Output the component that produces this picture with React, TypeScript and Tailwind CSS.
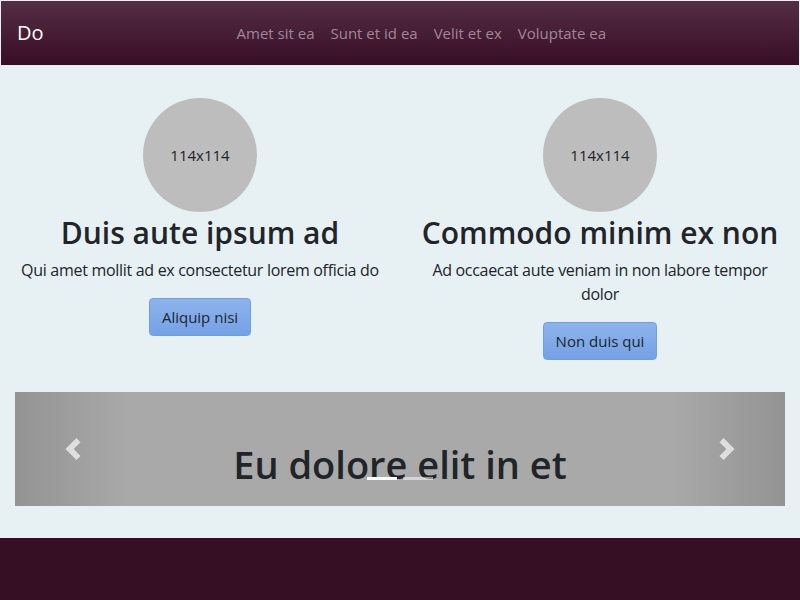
import React from "react";

function Chevron({ dir }: { dir: "left" | "right" }) {
  return (
    <svg width="22" height="22" viewBox="0 0 8 8" aria-hidden="true">
      {dir === "left" ? (
        <path d="M5.25 0l-4 4 4 4 1.5-1.5L4.25 4l2.5-2.5L5.25 0z" fill="#dedede" />
      ) : (
        <path d="M2.75 0l-1.5 1.5L3.75 4l-2.5 2.5L2.75 8l4-4-4-4z" fill="#dedede" />
      )}
    </svg>
  );
}

function Feature({
  title,
  text,
  button,
}: {
  title: string;
  text: string;
  button: string;
}) {
  return (
    <div className="flex flex-col items-center text-center px-[15px]">
      <div className="w-[114px] h-[114px] rounded-full bg-[#bdbdbd] flex items-center justify-center text-[15px] text-[#212529]">
        114x114
      </div>
      <h2 className="pt-[2px] text-[30px] font-semibold leading-[38px] mb-[6px] text-[#212529]">{title}</h2>
      <p className="text-base tracking-[-0.3px] leading-6 mb-4 text-[#212529]">{text}</p>
      <button className="px-3 py-1.5 border border-[#6f9fe3] rounded bg-linear-to-b from-[#8db3eb] to-[#74a2e6] text-[15px] leading-6 text-[#212529]">
        {button}
      </button>
    </div>
  );
}

export default function App() {
  return (
    <div className="min-h-[600px] bg-[#e7f0f2] font-['Open_Sans',sans-serif] flex flex-col">
      <header className="h-[65px] shrink-0 border-t border-x border-[#e7f0f2] bg-linear-to-b from-[#532e46] to-[#380d25] flex items-center px-4">
        <span className="text-xl text-white mr-4">Do</span>
        <nav className="flex-1 flex justify-center">
          {["Amet sit ea", "Sunt et id ea", "Velit et ex", "Voluptate ea"].map((l) => (
            <a key={l} className="px-2 text-[15px] text-[#a08797]">
              {l}
            </a>
          ))}
        </nav>
      </header>
      <main className="pt-[33px]">
        <div className="grid grid-cols-2 items-start">
          <Feature
            title="Duis aute ipsum ad"
            text="Qui amet mollit ad ex consectetur lorem officia do"
            button="Aliquip nisi"
          />
          <Feature
            title="Commodo minim ex non"
            text="Ad occaecat aute veniam in non labore tempor dolor"
            button="Non duis qui"
          />
        </div>
        <div className="relative mt-8 mx-[15px] h-[114px] bg-[#a9a9a9] overflow-hidden">
          <div className="absolute left-[15%] right-[15%] bottom-[18px] text-center text-[38px] font-semibold leading-[48px] text-[#212529]">
            Eu dolore elit in et
          </div>
          <div className="absolute left-0 top-0 bottom-0 w-[15%] flex items-center justify-center bg-linear-to-r from-[rgba(0,0,0,0.13)] to-transparent">
            <Chevron dir="left" />
          </div>
          <div className="absolute right-0 top-0 bottom-0 w-[15%] flex items-center justify-center bg-linear-to-l from-[rgba(0,0,0,0.13)] to-transparent">
            <Chevron dir="right" />
          </div>
          <div className="absolute left-0 right-0 bottom-[26px] flex justify-center gap-[6px]">
            <span className="w-[30px] h-[3px] bg-white" />
            <span className="w-[30px] h-[3px] bg-white/50" />
          </div>
        </div>
      </main>
      <footer className="mt-8 flex-1 min-h-[62px] bg-[#370f25]" />
    </div>
  );
}
